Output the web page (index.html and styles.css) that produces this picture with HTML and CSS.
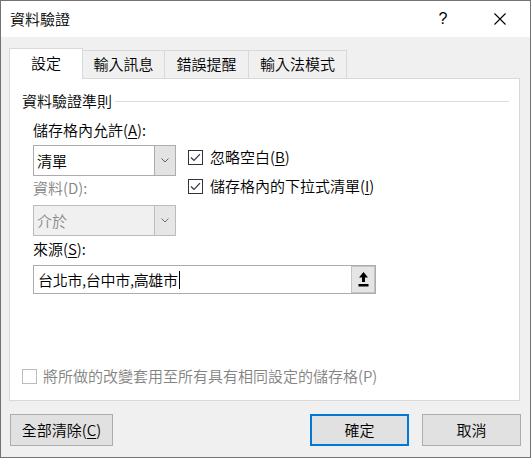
FILE: index.html
```html
<!DOCTYPE html>
<html lang="zh-Hant">
<head>
<meta charset="utf-8">
<title>資料驗證</title>
<link rel="stylesheet" href="styles.css">
</head>
<body>
<div class="window">
  <div class="titlebar">
    <span class="title">資料驗證</span>
    <span class="help">?</span>
    <svg class="close" width="12" height="12" viewBox="0 0 12 12"><path d="M0.5 0.5 L11.5 11.5 M11.5 0.5 L0.5 11.5" stroke="#000" stroke-width="1.1" fill="none"/></svg>
  </div>
  <div class="body">
    <div class="tabs">
      <div class="tab active w1">設定</div>
      <div class="tab w2">輸入訊息</div>
      <div class="tab w3">錯誤提醒</div>
      <div class="tab w4">輸入法模式</div>
    </div>
    <div class="panel">
      <div class="group-head"><span>資料驗證準則</span><span class="rule"></span></div>
      <div class="group">
        <div class="label r1">儲存格內允許(<u>A</u>):</div>
        <div class="select r2">
          <span class="value">清單</span>
          <span class="arrow"><svg width="8" height="5" viewBox="0 0 8 5"><path d="M0.5 0.5 L4 4 L7.5 0.5" stroke="#606060" stroke-width="1" fill="none"/></svg></span>
        </div>
        <div class="label disabled r3">資料(D):</div>
        <div class="select disabled r4">
          <span class="value">介於</span>
          <span class="arrow"><svg width="8" height="5" viewBox="0 0 8 5"><path d="M0.5 0.5 L4 4 L7.5 0.5" stroke="#707070" stroke-width="1" fill="none"/></svg></span>
        </div>
        <div class="checks">
          <div class="check">
            <span class="box"><svg width="13" height="13" viewBox="0 0 13 13"><path d="M2 6.5 L5 9.5 L11 3.2" stroke="#33334a" stroke-width="1.2" fill="none"/></svg></span>
            <span>忽略空白(<u>B</u>)</span>
          </div>
          <div class="check">
            <span class="box"><svg width="13" height="13" viewBox="0 0 13 13"><path d="M2 6.5 L5 9.5 L11 3.2" stroke="#33334a" stroke-width="1.2" fill="none"/></svg></span>
            <span>儲存格內的下拉式清單(<u>I</u>)</span>
          </div>
        </div>
      </div>
      <div class="label source-label">來源(<u>S</u>):</div>
      <div class="source">
        <span class="source-text">台北市,台中市,高雄市<span class="caret"></span></span>
        <span class="collapse"><svg width="11" height="15" viewBox="0 0 11 15"><path d="M5.5 0 L10 5.5 L7 5.5 L7 10 L4 10 L4 5.5 L1 5.5 Z" fill="#000"/><rect x="0.5" y="12" width="10" height="2.5" fill="#000"/></svg></span>
      </div>
      <div class="check apply disabled">
        <span class="box"></span>
        <span>將所做的改變套用至所有具有相同設定的儲存格(P)</span>
      </div>
    </div>
    <div class="footer">
      <div class="btn clear">全部清除(<u>C</u>)</div>
      <div class="btn ok">確定</div>
      <div class="btn cancel">取消</div>
    </div>
  </div>
</div>
</body>
</html>
```
FILE: styles.css
```css
* { box-sizing: border-box; }
html, body { margin: 0; padding: 0; }
body {
  font-family: "Noto Sans CJK TC", "Noto Sans CJK JP", sans-serif;
  font-size: 15px;
  font-weight: 350;
  line-height: 20px;
  color: #000;
  background: #fff;
}
u { text-decoration: underline; text-underline-offset: 2px; }

.window {
  width: 531px;
  height: 458px;
  border: 1px solid #737373;
  display: flex;
  flex-direction: column;
  background: #f0f0f0;
}

.titlebar {
  height: 36px;
  flex: none;
  background: #fff;
  display: flex;
  align-items: center;
  padding-left: 9px;
}
.title { flex: 1; }
.help {
  width: 10px;
  text-align: center;
  font-family: "Liberation Sans", sans-serif;
  font-weight: 400;
  font-size: 16px;
  margin-right: 46px;
}
.close { display: block; margin-right: 24px; }

.body {
  flex: 1;
  display: flex;
  flex-direction: column;
  padding: 11px 10px 0 8px;
}

.tabs {
  display: flex;
  align-items: flex-end;
  height: 30px;
  position: relative;
  z-index: 1;
}
.tab {
  height: 28px;
  border: 1px solid #d9d9d9;
  border-bottom: none;
  background: #f0f0f0;
  display: flex;
  align-items: center;
  justify-content: center;
  padding-bottom: 2px;
  margin-left: -1px;
}
.tab.active {
  height: 31px;
  margin-bottom: -1px;
  margin-left: 0;
  background: #fff;
}
.w1 { width: 74px; }
.w2 { width: 83px; }
.w3 { width: 85px; }
.w4 { width: 99px; }

.panel {
  height: 323px;
  flex: none;
  border: 1px solid #d9d9d9;
  background: #fff;
  padding: 12px 10px 0 12px;
  display: flex;
  flex-direction: column;
}
.group-head { display: flex; align-items: center; }
.group-head .rule {
  flex: 1;
  height: 1px;
  background: #dcdcdc;
  margin-left: 3px;
  margin-top: 1px;
}

.group {
  display: grid;
  grid-template-columns: 143px auto;
  column-gap: 12px;
  padding-left: 11px;
  margin-top: 9px;
  align-items: start;
}
.r1 { grid-column: 1; grid-row: 1; }
.r2 { grid-column: 1; grid-row: 2; margin-top: 5px; }
.r3 { grid-column: 1; grid-row: 3; margin-top: 2px; }
.r4 { grid-column: 1; grid-row: 4; margin-top: 7px; }

.label.disabled, .check.disabled { color: #838383; }

.select {
  height: 31px;
  border: 1px solid #acacac;
  background: #fff;
  display: flex;
  align-items: center;
}
.select .value { flex: 1; padding-left: 3px; }
.select .arrow {
  width: 21px;
  height: 100%;
  border-left: 1px solid #acacac;
  background: #e3e3e3;
  display: flex;
  align-items: center;
  justify-content: center;
}
.select.disabled { background: #f0f0f0; border-color: #bcbcbc; color: #8a8a8a; }
.select.disabled .arrow { border-left-color: #bcbcbc; background: #e6e6e6; }

.checks {
  grid-column: 2;
  grid-row: 2 / span 3;
  display: flex;
  flex-direction: column;
  gap: 9px;
  margin-top: 7px;
}
.check { display: flex; align-items: center; gap: 7px; }
.box {
  width: 15px;
  height: 15px;
  flex: none;
  border: 1px solid #333;
  background: #fff;
  display: flex;
  align-items: center;
  justify-content: center;
}
.check.disabled .box { border-color: #bcbcbc; }

.source-label { margin-top: 3px; padding-left: 11px; }
.source {
  margin-top: 6px;
  margin-left: 11px;
  width: 343px;
  height: 29px;
  border: 1px solid #acacac;
  display: flex;
  align-items: stretch;
}
.source-text {
  flex: 1;
  padding-left: 4px;
  display: flex;
  align-items: center;
  letter-spacing: -0.3px;
}
.caret {
  display: inline-block;
  width: 1px;
  height: 18px;
  background: #000;
  margin-left: 1px;
}
.collapse {
  width: 24px;
  border: 1px solid #c4c4c4;
  background: #e5e5e5;
  display: flex;
  align-items: center;
  justify-content: center;
}

.apply { margin-top: 72px; gap: 6px; }

.footer {
  display: flex;
  margin-top: 13px;
}
.btn {
  height: 32px;
  border: 1px solid #adadad;
  background: #e1e1e1;
  display: flex;
  align-items: center;
  justify-content: center;
}
.btn.clear { width: 103px; margin-right: auto; margin-left: 1px; }
.btn.ok { width: 99px; border: 2px solid #0078d7; }
.btn.cancel { width: 99px; margin-left: 13px; margin-right: -1px; }
```
